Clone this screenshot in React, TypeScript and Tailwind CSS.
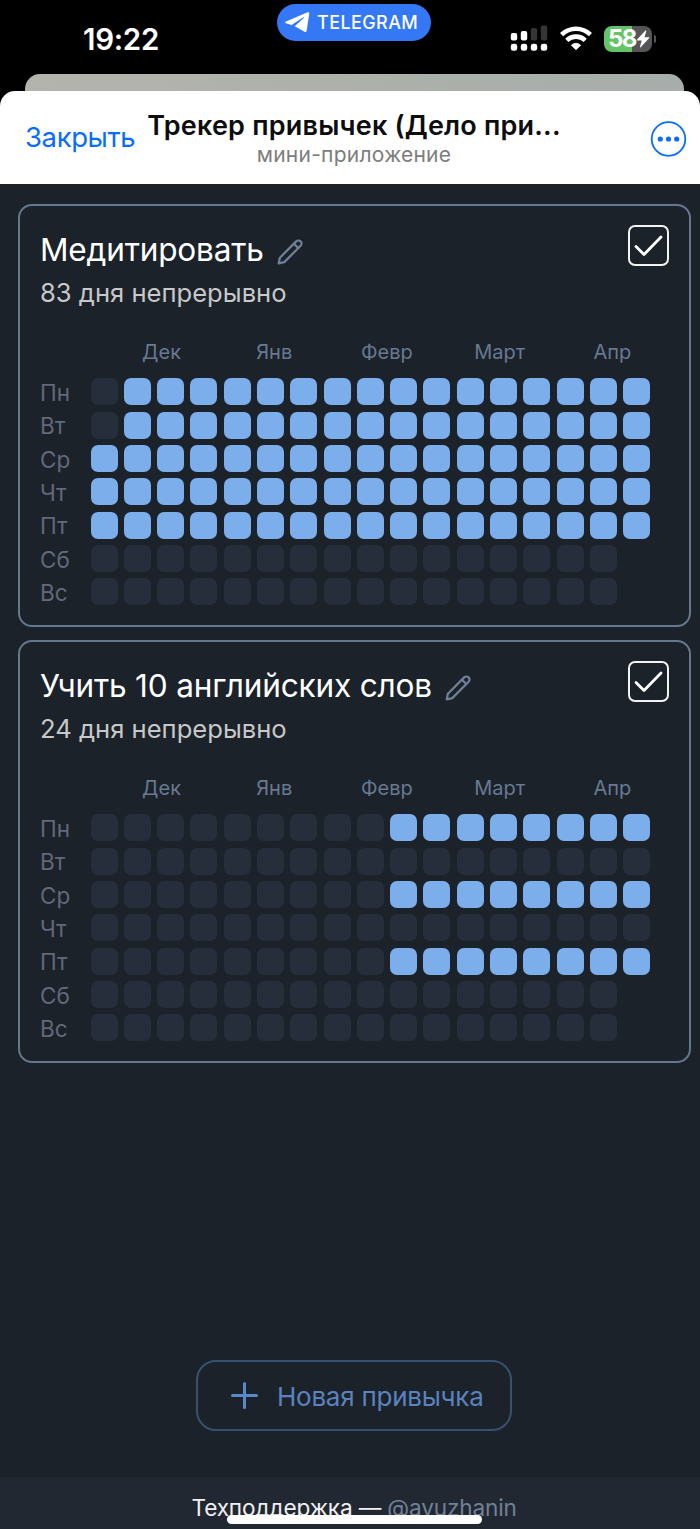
import React from 'react';

type Habit = {
  title: string;
  streak: string;
  // one string per weekday: "1" done, "0" empty, missing = day has not come yet
  rows: string[];
};

const MONTHS = ['Дек', 'Янв', 'Февр', 'Март', 'Апр'];
const WEEKDAYS = ['Пн', 'Вт', 'Ср', 'Чт', 'Пт', 'Сб', 'Вс'];

const habits: Habit[] = [
  {
    title: 'Медитировать',
    streak: '83 дня непрерывно',
    rows: [
      '01111111111111111',
      '01111111111111111',
      '11111111111111111',
      '11111111111111111',
      '11111111111111111',
      '0000000000000000',
      '0000000000000000',
    ],
  },
  {
    title: 'Учить 10 английских слов',
    streak: '24 дня непрерывно',
    rows: [
      '00000000011111111',
      '00000000000000000',
      '00000000011111111',
      '00000000000000000',
      '00000000011111111',
      '0000000000000000',
      '0000000000000000',
    ],
  },
];

const SignalIcon = () => (
  <svg width="38" height="27" viewBox="0 0 38 27" fill="#fff">
    <rect x="0.8" y="8" width="6.4" height="7.5" rx="2" />
    <rect x="10.8" y="6" width="6.4" height="9.5" rx="2" />
    <rect x="20.8" y="3" width="6.4" height="12.5" rx="2" fill="#353535" />
    <rect x="30.8" y="0.5" width="6.4" height="15" rx="2" fill="#353535" />
    <rect x="0.8" y="18.8" width="6.4" height="7" rx="2.4" />
    <rect x="10.8" y="18.8" width="6.4" height="7" rx="2.4" />
    <rect x="20.8" y="18.8" width="6.4" height="7" rx="2.4" />
    <rect x="30.8" y="18.8" width="6.4" height="7" rx="2.4" />
  </svg>
);

const WifiIcon = () => (
  <svg width="34" height="26" viewBox="0 0 34 26" fill="none" stroke="#fff" strokeWidth="4.6">
    <path d="M2.6 8.6a20.600 20.600 0 0 1 28.800 0" />
    <path d="M7.800 14.4a13.200 13.200 0 0 1 18.400 0" />
    <path d="M17 23.800l-4.600-4.600a6.600 6.600 0 0 1 9.200 0z" fill="#fff" stroke="#fff" strokeWidth="0.8" strokeLinejoin="round" />
  </svg>
);

const PlaneIcon = () => (
  <svg width="25" height="21" viewBox="0 0 25 21" fill="#fff">
    <path d="M22.600.3 1 9.400c-1.200.6-1.100 1.500 0 1.900l5.600 1.700L18.400 5.300c.6-.4 1 0 .6.4L9.700 14.300l9.800 5.500c1 .5 1.800.2 2.100-.9L24.300 1.600c.2-1.100-.6-1.700-1.700-1.300z" />
  </svg>
);

const PencilIcon = () => (
  <svg
    width="26"
    height="26"
    viewBox="0 0 26 26"
    fill="none"
    stroke="#718096"
    strokeWidth="2.2"
    strokeLinecap="round"
    strokeLinejoin="round"
  >
    <path d="M1.700 24.300 2.900 18.700 19.200 2.400a3.050 3.050 0 0 1 4.400 4.400L7.300 23.100z" />
    <path d="M17 4.800 21.200 9" />
  </svg>
);

const StatusBar = () => (
  <div className="relative h-[91px] bg-black">
    <div className="flex h-[74px] items-start">
      <span className="ml-[83px] mt-[22px] w-[194px] text-[29.500px] leading-[34px] font-semibold tracking-[-0.3px] text-white">19:22</span>
      <div className="mt-1 flex h-[37px] w-[154px] items-center rounded-full bg-[#3478f6] pl-2 text-white">
        <PlaneIcon />
        <span className="ml-[7px] text-[18px] leading-6 font-medium tracking-[0.4px]">TELEGRAM</span>
      </div>
      <div className="mt-[25px] mr-[44px] ml-auto flex items-center">
        <SignalIcon />
        <div className="ml-[11px]">
          <WifiIcon />
        </div>
        <div className="ml-[11px] flex h-[26px] w-[48px] items-center rounded-[8px] bg-linear-to-r from-[#65c466] from-58% to-[#555557] to-58% pl-[4px]">
          <span className="text-[24px] leading-[26px] font-bold tracking-[-1.5px] text-white">58</span>
          <svg width="14" height="18" viewBox="0 0 14 18" fill="#fff">
            <path d="M9.500.6.8 9.700c-.3.400-.1.700.3.700h4.600L4 16.800c-.2.700.4.900.8.400l8.400-9.300c.3-.4.1-.7-.3-.7H8.500l1.800-6.100c.2-.7-.4-.9-.8-.5z" />
          </svg>
        </div>
        <div className="ml-[2px] h-[8px] w-[2px] rounded-r-full bg-[#555557]" />
      </div>
    </div>
    <div className="mr-[16px] ml-[25px] h-[17px] rounded-t-[15px] bg-linear-to-r from-[#b3b4ac] to-[#a7adaa]" />
  </div>
);

const AppHeader = () => (
  <div className="bg-black">
    <header className="flex h-[93px] items-start rounded-t-[15px] bg-white">
      <button className="mt-[29px] ml-[25px] w-[123px] text-left text-[27.500px] leading-[34px] tracking-[-0.4px] whitespace-nowrap text-[#0a6cff]">
        Закрыть
      </button>
      <div className="mt-[17px] flex w-[412px] flex-col items-center whitespace-nowrap">
        <h1 className="text-[27px] leading-[36px] font-semibold tracking-[0.200px] text-[#0d0d0d]">Трекер привычек (Дело при...</h1>
        <p className="-mt-[2px] text-[21px] leading-[26px] tracking-[0.250px] text-[#7d7d7d]">мини-приложение</p>
      </div>
      <button className="mt-[30px] ml-[90px]">
        <svg width="37" height="37" viewBox="0 0 37 37" fill="#0a6cff">
          <circle cx="18.500" cy="18" r="16.800" fill="none" stroke="#0a6cff" strokeWidth="1.800" />
          <circle cx="10.300" cy="18" r="2.600" />
          <circle cx="18.500" cy="18" r="2.600" />
          <circle cx="26.700" cy="18" r="2.600" />
        </svg>
      </button>
    </header>
  </div>
);

const HabitCard: React.FC<{ habit: Habit }> = ({ habit }) => (
  <section className="h-[423px] rounded-[14px] border-2 border-[#66768c] px-5">
    <div className="flex h-[108px] justify-between pt-[18px]">
      <div className="whitespace-nowrap">
        <div className="flex items-center pt-px">
          <h2 className="text-[31.600px] leading-[50px] tracking-[-0.200px] text-white">{habit.title}</h2>
          <button className="mt-[4px] ml-[13px]">
            <PencilIcon />
          </button>
        </div>
        <p className="mt-[2px] text-[25.600px] leading-[32px] text-[#c8c8c8]">{habit.streak}</p>
      </div>
      <button className="mt-px flex h-[41px] w-[41px] items-center justify-center rounded-[7px] border-2 border-[#f3f3f3]">
        <svg width="29" height="22" viewBox="0 0 29 22" fill="none" stroke="#fff" strokeWidth="2.800" strokeLinecap="round" strokeLinejoin="round">
          <path d="M2 11.500 10 19.500 27 2" />
        </svg>
      </button>
    </div>
    <div className="mt-[24px] ml-[65.200px] flex">
      {MONTHS.map((month) => (
        <div key={month} className="w-[112.700px] shrink-0 text-center text-[20px] leading-7 text-[#697990]">
          {month}
        </div>
      ))}
    </div>
    <div className="mt-[12.400px] flex flex-col gap-[6.330px]">
      {WEEKDAYS.map((day, i) => (
        <div key={day} className="flex h-[27px] items-center">
          <span className="w-[50.500px] shrink-0 pt-px text-[22.500px] leading-[27px] text-[#626978]">{day}</span>
          <div className="flex gap-[6.310px]">
            {habit.rows[i].split('').map((cell, idx) => (
              <div key={idx} className={`h-[27px] w-[27px] rounded-[7px] ${cell === '1' ? 'bg-[#7caeeb]' : 'bg-[#252e3a]'}`} />
            ))}
          </div>
        </div>
      ))}
    </div>
  </section>
);

const App: React.FC = () => {
  return (
    <div className="flex h-[1529px] w-[700px] flex-col overflow-hidden bg-[#1b222a] font-['Inter','Liberation_Sans',sans-serif]">
      <StatusBar />
      <AppHeader />
      <main className="flex flex-1 flex-col pt-5 pr-[9px] pl-[18px]">
        <div className="flex flex-col gap-[13px]">
          {habits.map((habit) => (
            <HabitCard key={habit.title} habit={habit} />
          ))}
        </div>
        <button className="mt-auto mb-[46px] ml-[178px] flex h-[71px] w-[316px] items-center rounded-[20px] border-2 border-[#385072] pl-[33px] whitespace-nowrap">
          <svg width="27" height="27" viewBox="0 0 27 27" fill="none" stroke="#5b88ca" strokeWidth="3" strokeLinecap="round">
            <path d="M13.500 1.500v24M1.500 13.500h24" />
          </svg>
          <span className="mt-[2px] ml-[19px] text-[26px] leading-8 tracking-[-0.250px] text-[#5b82bd]">Новая привычка</span>
        </button>
      </main>
      <footer className="relative h-[52px] bg-[#212832] pt-[15px] pl-[191.500px] text-[22.600px] leading-8 tracking-[-0.150px] whitespace-nowrap text-[#f0f0f0]">
        Техподдержка — <a href="#" className="text-[#718096]">@avuzhanin</a>
        <div className="absolute bottom-[5px] left-[227px] h-[9px] w-[255px] rounded-full bg-white" />
      </footer>
    </div>
  );
};

export default App;
